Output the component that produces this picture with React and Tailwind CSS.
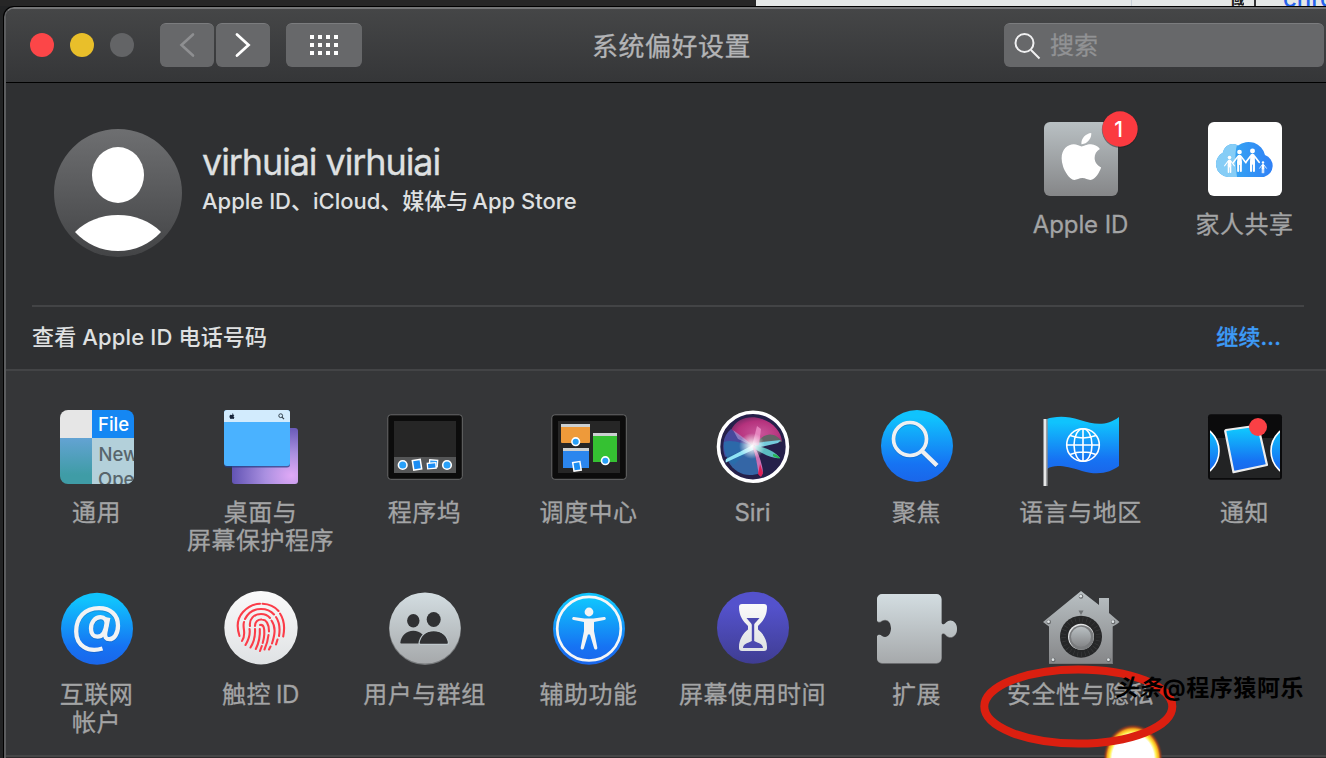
import React from "react";
import { FaApple } from "react-icons/fa";

function Icon({ children, label }) {
  return (
    <svg width="84" height="84" viewBox="0 0 84 84" className="block shrink-0 overflow-visible" role="img" aria-label={label}>
      {children}
    </svg>
  );
}

function Gradients() {
  return (
    <svg width="0" height="0" className="absolute">
      <defs>
        <linearGradient id="blue" x1="0" y1="0" x2="0" y2="1">
          <stop offset="0.1" stopColor="#10c3fd" />
          <stop offset="0.75" stopColor="#1673f3" />
          <stop offset="1" stopColor="#1a66ea" />
        </linearGradient>
        <linearGradient id="silver" x1="0" y1="0" x2="0" y2="1">
          <stop offset="0" stopColor="#d3dde1" />
          <stop offset="1" stopColor="#a6a9ab" />
        </linearGradient>
        <linearGradient id="grey" x1="0" y1="0" x2="0" y2="1">
          <stop offset="0" stopColor="#b9c0c3" />
          <stop offset="1" stopColor="#858688" />
        </linearGradient>
        <linearGradient id="white" x1="0" y1="0" x2="0" y2="1">
          <stop offset="0" stopColor="#fafafa" />
          <stop offset="1" stopColor="#dfe2e4" />
        </linearGradient>
        <linearGradient id="avatar" x1="0" y1="0" x2="0" y2="1">
          <stop offset="0" stopColor="#6e6f71" />
          <stop offset="1" stopColor="#434446" />
        </linearGradient>
        <linearGradient id="cloud" x1="0" y1="0" x2="1" y2="0">
          <stop offset="0.3" stopColor="#36a5f3" />
          <stop offset="1" stopColor="#2f80f6" />
        </linearGradient>
        <linearGradient id="teal" x1="0" y1="0" x2="0" y2="1">
          <stop offset="0" stopColor="#63a3d3" />
          <stop offset="0.8" stopColor="#3f9ca6" />
        </linearGradient>
        <linearGradient id="indigo" x1="0" y1="0" x2="0" y2="1">
          <stop offset="0.2" stopColor="#5452cc" />
          <stop offset="1" stopColor="#3f3d92" />
        </linearGradient>
        <radialGradient id="lilac" cx="0.9" cy="0.85" r="0.9">
          <stop offset="0" stopColor="#e0a9f6" />
          <stop offset="0.45" stopColor="#a98fe0" />
          <stop offset="1" stopColor="#6254b4" />
        </radialGradient>
        <radialGradient id="pink" cx="0.55" cy="0.55" r="0.6">
          <stop offset="0" stopColor="#c9559a" />
          <stop offset="0.7" stopColor="#b5327d" />
          <stop offset="1" stopColor="#7d2a68" />
        </radialGradient>
        <radialGradient id="glow">
          <stop offset="0" stopColor="#ffffff" />
          <stop offset="0.3" stopColor="#ffffff" stopOpacity="0.75" />
          <stop offset="1" stopColor="#ffffff" stopOpacity="0" />
        </radialGradient>
        <radialGradient id="flame">
          <stop offset="0.7" stopColor="#ffffff" />
          <stop offset="0.78" stopColor="#fff04a" />
          <stop offset="0.86" stopColor="#f5a81c" />
          <stop offset="0.92" stopColor="#b0441a" stopOpacity="0.8" />
          <stop offset="1" stopColor="#5a3028" stopOpacity="0" />
        </radialGradient>
      </defs>
    </svg>
  );
}

const Person = ({ x, y, s }) => (
  <g transform={`translate(${x} ${y}) scale(${s})`} stroke="#fff" strokeLinecap="round" fill="none">
    <circle cx="0" cy="0" r="2.4" fill="#fff" stroke="none" />
    <path d="M0 5v6" strokeWidth="4.600" />
    <path d="M-2 5l-4.500 6M2 5l4.500 6" strokeWidth="1.600" />
    <path d="M-1.400 10v9.500M1.400 10v9.500" strokeWidth="2" />
  </g>
);

const AppleIdIcon = () => (
  <Icon label="Apple ID">
    <rect x="6" y="6" width="74" height="74" rx="6" fill="url(#grey)" />
    <FaApple x="16.500" y="13.600" size={53.7} color="#fff" />
    <circle cx="82" cy="13.600" r="18.200" fill="#1f2021" opacity="0.5" />
    <circle cx="82" cy="13" r="17.700" fill="#fb3a40" />
    <text x="80.500" y="20.500" textAnchor="middle" fontFamily="Inter, sans-serif" fontSize="21" fontWeight="500" fill="#fff">1</text>
  </Icon>
);

const FamilyIcon = () => (
  <Icon label="家人共享">
    <rect x="6" y="6" width="74" height="74" rx="6" fill="#fff" />
    <path d="M26 61a13 13 0 0 1-5-24.500 10 10 0 0 1 15-7 17 17 0 0 1 27 9.500 11.500 11.500 0 0 1-1 22z" fill="url(#cloud)" />
    <path d="M26 61a13 13 0 0 1-5-24.500 10 10 0 0 1 14-7.500c-3 10-1 22 0 32z" fill="#86cdf6" />
    <Person x={27.500} y={41.500} s={0.75} />
    <Person x={37.500} y={36} s={0.98} />
    <Person x={50.500} y={35} s={1.03} />
    <Person x={61} y={46.500} s={0.52} />
  </Icon>
);

const GeneralIcon = () => (
  <Icon label="通用">
    <clipPath id="generalClip"><rect x="6" y="6" width="74" height="74" rx="8" /></clipPath>
    <g clipPath="url(#generalClip)" fontFamily="Inter, sans-serif" fontSize="18.500">
      <rect x="6" y="6" width="32" height="28" fill="#e6e6e6" />
      <rect x="38" y="6" width="42" height="28" fill="#1587f3" />
      <rect x="6" y="34" width="32" height="46" fill="url(#teal)" />
      <rect x="38" y="34" width="42" height="46" fill="#b3d0da" />
      <text x="44" y="27" fill="#fff" fontWeight="500">File</text>
      <text x="44.500" y="57" fill="#58656c" fontWeight="500">New</text>
      <text x="44" y="81.500" fill="#58656c" fontWeight="500">Open</text>
    </g>
  </Icon>
);

const DesktopIcon = () => (
  <Icon label="桌面与屏幕保护程序">
    <rect x="14" y="24" width="66" height="56" rx="3" fill="url(#lilac)" />
    <rect x="6" y="7" width="66" height="56.500" rx="3" fill="#243f86" opacity="0.75" />
    <rect x="6" y="6" width="66" height="56" rx="3" fill="#4ab2ff" />
    <path d="M6 18V9a3 3 0 0 1 3-3h60a3 3 0 0 1 3 3v9z" fill="#d2ebfd" />
    <FaApple x="10.600" y="8.800" size={6.7} color="#16243a" />
    <circle cx="62.700" cy="11.700" r="1.900" fill="none" stroke="#34424e" />
    <path d="M64 13.200l2 2" stroke="#34424e" strokeWidth="1.200" />
  </Icon>
);

const Screen = ({ children }) => (
  <>
    <rect x="5.800" y="10.800" width="74.500" height="64.500" rx="3" fill="#0c0c0c" stroke="#68696a" />
    <rect x="12" y="17" width="62" height="52" fill="#262626" />
    {children}
  </>
);

const Dot = ({ x, y, r = 4 }) => <circle cx={x} cy={y} r={r} fill="#28a0f8" stroke="#fff" strokeWidth="1.600" />;

const DockIcon = () => (
  <Icon label="程序坞">
    <Screen>
      <rect x="12" y="53" width="62" height="16" fill="#555657" />
      <Dot x={20.700} y={61} r={4.300} />
      <rect x="31" y="56" width="8" height="9.500" fill="#1c8df3" stroke="#fff" strokeWidth="1.500" transform="rotate(-9 35 60.700)" />
      <rect x="47.500" y="56" width="8" height="6.500" fill="#2c9cf6" stroke="#fff" strokeWidth="1.300" transform="rotate(4 51 59)" />
      <rect x="45.500" y="59" width="8.500" height="5.500" fill="#1c8df3" stroke="#fff" strokeWidth="1.300" transform="rotate(-5 50 62)" />
      <Dot x={65} y={61} r={4.300} />
    </Screen>
  </Icon>
);

const MissionIcon = () => (
  <Icon label="调度中心">
    <Screen>
      <path d="M15 21a1 1 0 0 1 1-1h27a1 1 0 0 1 1 1v17a1 1 0 0 1-1 1H16a1 1 0 0 1-1-1z" fill="#ee9a3a" />
      <path d="M15 20h29v3H15zM17 44h26v3H17zM47 29h24v3H47z" fill="#ccd0d1" />
      <path d="M17 47h26v17H17z" fill="#2b86ee" />
      <path d="M47 32h24v26H47z" fill="#35c132" />
      <Dot x={29.700} y={37.700} r={3.800} />
      <Dot x={59.300} y={56.700} r={3.800} />
      <rect x="27.300" y="58" width="7.300" height="8.700" fill="#1c8df3" stroke="#fff" strokeWidth="1.500" transform="rotate(-9 31 62.300)" />
    </Screen>
  </Icon>
);

const SiriIcon = () => (
  <Icon label="Siri">
    <clipPath id="siriClip"><circle cx="43" cy="42.700" r="31.500" /></clipPath>
    <circle cx="43" cy="42.700" r="34.500" fill="#25204a" stroke="#fff" strokeWidth="3.600" />
    <g clipPath="url(#siriClip)">
      <path d="M21 26C27 14 40 11 52 15s19 13 20 22C62 34 54 34 46 42 35 38 30 33 21 26z" fill="url(#pink)" />
      <path d="M21 25c-9 7-9 20-6 28l28-10C36 38 30 33 21 25z" fill="#46499c" />
      <path d="M18 57c7 13 20 17 32 12L43 44z" fill="#3466a6" />
      <path d="M14 38c8-3 20 2 29 4L24 61c-8-5-11-14-10-23z" fill="#286fac" opacity="0.85" />
      <path d="M46 39c10-12 20-10 26-1z" fill="#626466" />
      <path d="M43 41L16 55l-1 4 4-2 26-12z" fill="#8fe4f5" />
      <path d="M44 39l27-3-3 3-22 5z" fill="#74cbdc" />
      <path d="M43 42c10 0 22 5 27 12-7 1-15-3-27-10z" fill="#5bbdc0" />
      <path d="M63 50c4 0 6 3 7 4s-4 0-7-2z" fill="#28b752" />
      <path d="M42 42c4 9 5 19 7 29 3 2 5-1 3-9-2-8-4-14-8-20z" fill="#c86fb4" />
      <path d="M50 60l3 9-2 4-3-3z" fill="#e01f57" />
      <path d="M42 42l5-20 4 3-2 16z" fill="#ec91c8" opacity="0.8" />
      <path d="M43 42L28 35l-5-9 11 8z" fill="#a391d1" opacity="0.7" />
      <circle cx="42" cy="42" r="13" fill="url(#glow)" />
    </g>
  </Icon>
);

const SpotlightIcon = () => (
  <Icon label="聚焦">
    <circle cx="43" cy="42" r="36" fill="url(#blue)" />
    <g fill="none" stroke="#1759ad" opacity="0.4" transform="translate(0 1)">
      <circle cx="36" cy="35" r="16.500" strokeWidth="3.700" />
      <path d="M48.500 47.500L63 61.500" strokeWidth="4.500" />
    </g>
    <g fill="none" stroke="#eff0f1">
      <circle cx="36" cy="35" r="16.500" strokeWidth="3.700" />
      <path d="M48.500 47.500L63 61.500" strokeWidth="4.500" />
    </g>
  </Icon>
);

const FlagIcon = () => (
  <Icon label="语言与地区">
    <path d="M9 15c6-2 18-4 33 1s27 6 39-3v49c-8 6-20 10-37 5S17 60 9 65z" fill="url(#blue)" />
    <rect x="5" y="15" width="4.700" height="67" fill="#8c8e91" />
    <rect x="6" y="15" width="2.200" height="67" fill="#e7e8e8" />
    <g fill="none" stroke="#fff" strokeWidth="1.600">
      <circle cx="45" cy="41" r="16.300" />
      <ellipse cx="45" cy="41" rx="9" ry="16.300" />
      <path d="M45 24.700v32.600M28.700 41h32.600M32 31.500c8 3 18 3 26 0M32 50.500c8-3 18-3 26 0" />
    </g>
  </Icon>
);

const NotifyIcon = () => (
  <Icon label="通知">
    <clipPath id="notifyClip"><rect x="8" y="12" width="70" height="62" rx="2" /></clipPath>
    <rect x="6" y="10.300" width="74" height="65.500" rx="3" fill="#0b0b0c" />
    <rect x="8" y="34" width="70" height="40" fill="#222324" />
    <g clipPath="url(#notifyClip)">
      <circle cx="-11.500" cy="47" r="26" fill="url(#blue)" stroke="#fff" strokeWidth="1.600" transform="translate(2.500 0)" />
      <circle cx="95" cy="47" r="26" fill="url(#blue)" stroke="#fff" strokeWidth="1.600" />
    </g>
    <path d="M24 26l32-4.500L65 61l-33.500 7.200L23.200 27z" fill="url(#blue)" stroke="#eceded" strokeWidth="2.200" strokeLinejoin="round" />
    <circle cx="56" cy="23" r="9" fill="#fa4045" />
  </Icon>
);

const InternetIcon = () => (
  <Icon label="互联网帐户">
    <circle cx="43" cy="42.700" r="36" fill="url(#blue)" />
    {["#1a5aa8", "#f2f3f4"].map((c, i) => (
      <g key={c} fill="none" stroke={c} strokeWidth="4.300" strokeLinejoin="round" transform={`translate(0 ${i ? 0 : 1})`} opacity={i ? 1 : 0.4}>
        <path d="M48.500 62.500C34 67 22.200 59.500 22.200 45.500 22.200 31.500 31 22.200 45 22.200c11.500 0 19 6.800 19 17.500 0 8-4 13.500-8.500 13.500-3.500 0-5-2.200-4.200-6.500l3-15" />
        <path d="M52.500 38c.5-4-2-6.800-6-6.800-5.500 0-9.500 5-9.500 11.500 0 5 2.500 8 6.500 8 4.800 0 8-5 9-12.700z" />
      </g>
    ))}
  </Icon>
);

const TouchIcon = () => (
  <Icon label="触控 ID">
    <circle cx="43" cy="41.700" r="36.700" fill="url(#white)" />
    <g fill="none" stroke="#fb3d49" strokeWidth="2.100" strokeLinecap="round">
      <path d="M21.500 50c-3-9-2-18 3.500-24s11-8 17-8.300M44.500 17.700c7 .3 12 2.500 16 7.300M62 27.500c4 6 5 14 3.200 23" />
      <path d="M27 33c3-6 9-10 16-10 5 0 10 2 13 5.500M58 31c4 6 4 13 3 19M59.500 53.500l-1.500 5M26 36c-2 6 3 12-2 19" />
      <path d="M32 40c-1-7 4-12 11-12 4 0 7 1.500 9 4M53.500 34.500c5 7 3 15 .5 23M52.500 60.500l-1.500 3M31.500 43c1 6-1 11-4 16" />
      <path d="M37 40c0-4 3-7 7-6.500 6 .5 7 6 7 12M50.500 49c-.5 5-2 10-4 14.500M37 43c.5 8-1 13-4.500 18.500" />
      <path d="M42 39c4-1 4.500 4 4.300 9-.1 3-.7 6-1.600 9M43.800 60l-1.800 5M41.800 43c.5 8-1 14-4 20" />
    </g>
  </Icon>
);

const UsersIcon = () => (
  <Icon label="用户与群组">
    <circle cx="43" cy="42.900" r="36" fill="#76797b" />
    <circle cx="43" cy="42" r="35.600" fill="url(#silver)" />
    <g fill="#303133">
      <ellipse cx="31.300" cy="34.700" rx="6.200" ry="6.800" />
      <path d="M18.300 57c.5-7 6-12.300 13-12.300S44 50 44 57.500H19z" />
      <path d="M37 57.500c1-8 7-12.800 14.700-12.800S66 49.500 66.500 57.500l-1 .8H38z" stroke="#bfc8cb" strokeWidth="1.200" />
      <ellipse cx="51.700" cy="33.500" rx="7" ry="7.600" />
    </g>
  </Icon>
);

const AccessIcon = () => (
  <Icon label="辅助功能">
    <circle cx="43" cy="42.700" r="36" fill="url(#blue)" />
    <circle cx="43" cy="42.700" r="31.800" fill="none" stroke="#f4f6f7" strokeWidth="2.700" />
    <circle cx="43" cy="26" r="4.400" fill="#f3f4f5" />
    <path d="M28 31l10.500 1.400h9L58 31c2.200-.2 2.500 2.700.3 3.100L48 36v9l3.300 16.500c.4 2.300-2.600 2.900-3.200.8L44 48.500h-2l-4.100 13.800c-.6 2.100-3.600 1.500-3.200-.8L38 45v-9l-10.300-1.900c-2.200-.4-1.900-3.300.3-3.100z" fill="#f3f4f5" />
  </Icon>
);

const ScreenTimeIcon = () => (
  <Icon label="屏幕使用时间">
    <circle cx="43" cy="41.700" r="36" fill="url(#indigo)" />
    <path d="M32 18h22c2 0 3 1 3 3 0 9-4 14-9 19v3.500c5 4 9 10 9 17.500v1c0 2-1 3-3 3H32c-2 0-3-1-3-3v-1c0-7.500 4-13.500 9-17.500V40c-5-5-9-10-9-19 0-2 1-3 3-3z" fill="url(#white)" />
    <path d="M36.500 32h13c-2 3-5.300 5-5.300 7v16c4 2 8.800 3 8.800 7H33c0-4 4.800-5 8.800-7V39c0-2-3.300-4-5.300-7z" fill="#4b49b0" />
  </Icon>
);

const puzzle = "M8 8h54.500a5 5 0 0 1 5 5v24c1 2 3 1.500 4.500-.5 4-4.500 11-1.500 11 6.200s-7 10.700-11 6.200c-1.500-2-3.500-2.500-4.500-.5V72a5 5 0 0 1-5 5H8a5 5 0 0 1-5-5V50c1.500-2 3.500-1.500 5 0 4.500 3 9-1 9-8s-4.500-10-9-7.500c-1.500 1.500-3.500 2-5 0V13a5 5 0 0 1 5-5z";
const ExtensionsIcon = () => (
  <Icon label="扩展">
    <path d={puzzle} fill="#7c7e80" transform="translate(0 .8)" />
    <path d={puzzle} fill="url(#silver)" />
  </Icon>
);

const SecurityIcon = () => (
  <Icon label="安全性与隐私">
    <path d="M43 5l18 14v-7h10v15l10.500 9-2.500 2-4.300 2.500V78H11V40.500L5 36z" fill="url(#grey)" />
    <path d="M11 77.500h63.700" stroke="#77797a" />
    <path d="M40.500 24.500h5L43 29z" fill="#6e7274" />
    <circle cx="43" cy="50.700" r="21" fill="#262728" />
    <circle cx="43" cy="50.700" r="17.500" fill="none" stroke="#3c3d3e" strokeWidth="5" strokeDasharray="0.600 3.200" />
    <circle cx="43" cy="50.700" r="13" fill="#e2e4e5" />
    <circle cx="43.500" cy="51.500" r="12.300" fill="#7a7c7e" />
    <circle cx="43" cy="50.700" r="10" fill="url(#grey)" />
    {[[43, 10.500], [10.800, 36], [75.200, 36], [15.300, 74], [70.700, 74]].map(([x, y]) => (
      <g key={`${x}-${y}`}>
        <circle cx={x} cy={y} r="2.200" fill="#66696b" />
        <circle cx={x - 0.300} cy={y - 0.300} r="1.400" fill="#dfe4e6" />
      </g>
    ))}
  </Icon>
);

const TouchLabel = () => <>触控<span className="ml-[5px] tracking-[-0.3px]">ID</span></>;

const rowOne = [
  [GeneralIcon, "通用"],
  [DesktopIcon, "桌面与", "屏幕保护程序"],
  [DockIcon, "程序坞"],
  [MissionIcon, "调度中心"],
  [SiriIcon, "Siri"],
  [SpotlightIcon, "聚焦"],
  [FlagIcon, "语言与地区"],
  [NotifyIcon, "通知"],
];
const rowTwo = [
  [InternetIcon, "互联网", "帐户"],
  [TouchIcon, <TouchLabel key="touch" />],
  [UsersIcon, "用户与群组"],
  [AccessIcon, "辅助功能"],
  [ScreenTimeIcon, "屏幕使用时间"],
  [ExtensionsIcon, "扩展"],
  [SecurityIcon, "安全性与隐私"],
];

function Pane({ item }) {
  const [Glyph, ...lines] = item;
  const latin = typeof lines[0] === "string" && /^[A-Z]/.test(lines[0]);
  return (
    <button className="flex h-[182px] w-[164px] shrink-0 flex-col items-center gap-[11px]">
      <Glyph />
      <span className={`flex flex-col items-center pl-px text-[24px] leading-[27.500px] whitespace-nowrap text-[#a3a4a5] [-webkit-text-stroke:0.3px] ${latin ? "tracking-[-0.1px]" : "tracking-[0.5px]"}`}>
        {lines.map((line, i) => <span key={i}>{line}</span>)}
      </span>
    </button>
  );
}

function TitleBar() {
  return (
    <header className="flex h-[74px] shrink-0 items-start border-b border-black bg-linear-to-b from-[#454647] to-[#353638] pt-[14px] pl-6">
      <div className="flex h-11 items-center gap-4">
        <span className="size-6 rounded-full bg-[#fc4648]" />
        <span className="size-6 rounded-full bg-[#e9bf2a]" />
        <span className="size-6 rounded-full bg-[#636466]" />
      </div>
      <div className="ml-[26px] flex gap-0.5">
        <button className="flex h-11 w-[54px] items-center justify-center rounded-md border-t border-[#7b7c7e] bg-[#67686a] pb-0.5">
          <svg width="16" height="26" viewBox="0 0 16 26" fill="none" stroke="#8e8f91" strokeWidth="2.600" strokeLinecap="round"><path d="M14 2.500L2.500 13 14 23.500" /></svg>
        </button>
        <button className="flex h-11 w-[54px] items-center justify-center rounded-md border-t border-[#7b7c7e] bg-[#67686a] pb-0.5">
          <svg width="16" height="26" viewBox="0 0 16 26" fill="none" stroke="#fff" strokeWidth="2.800" strokeLinecap="round"><path d="M2 2.500L13.500 13 2 23.500" /></svg>
        </button>
      </div>
      <button className="ml-4 flex h-11 w-[76px] items-center justify-center rounded-md border-t border-[#7b7c7e] bg-[#67686a] pb-px">
        <span className="grid grid-cols-4 gap-1">
          {Array.from({ length: 12 }, (_, i) => <span key={i} className="size-1 bg-white" />)}
        </span>
      </button>
      <h1 className="flex-1 pt-px pr-[23px] text-center text-[26px] leading-[46px] tracking-[0.5px] text-[#b3b4b6] [-webkit-text-stroke:0.3px]">系统偏好设置</h1>
      <div className="mr-0.5 flex h-11 w-80 items-center rounded-md border-t border-[#7b7c7e] bg-[#67686a] pl-[10px]">
        <svg width="28" height="28" viewBox="0 0 28 28" fill="none" stroke="#f0f0f1" strokeWidth="2"><circle cx="10.500" cy="11" r="9" /><path d="M17 18l8.500 8.500" /></svg>
        <span className="ml-2 text-[24px] leading-none text-[#919294] [-webkit-text-stroke:0.3px]">搜索</span>
      </div>
    </header>
  );
}

function Profile() {
  return (
    <section className="flex h-[222px] shrink-0 items-start pl-12">
      <svg width="128" height="128" viewBox="0 0 128 128" className="mt-[46px] shrink-0">
        <circle cx="64" cy="64" r="64" fill="url(#avatar)" />
        <ellipse cx="64" cy="46" rx="26" ry="28" fill="#fff" />
        <path d="M21 103C32 92 47 86 64 86s32 6 43 17c-11 12-26 19-43 19s-32-7-43-19z" fill="#fff" />
      </svg>
      <div className="mt-[58px] ml-5 flex flex-1 flex-col whitespace-nowrap text-[#dfe0e1]">
        <span className="text-[36px] leading-[43px] tracking-[-1.1px] [-webkit-text-stroke:0.3px]">virhuiai virhuiai</span>
        <span className="mt-px text-[22px] leading-8 font-medium">Apple ID、iCloud、媒体与<span className="ml-1">App Store</span></span>
      </div>
      <div className="mt-[33px] flex">
        <Pane item={[AppleIdIcon, "Apple ID"]} />
        <Pane item={[FamilyIcon, "家人共享"]} />
      </div>
    </section>
  );
}

export default function App() {
  return (
    <div className="relative flex h-[758px] w-[1326px] flex-col overflow-hidden bg-[#222324] font-[Inter,'Noto_Sans_CJK_SC',sans-serif]">
      <Gradients />
      <div className="flex h-1.5 shrink-0 overflow-hidden bg-[#262626]">
        <div className="ml-[756px] flex h-1.5 flex-1 items-end overflow-hidden bg-[#e5e8e7]">
          <span className="ml-[375px] h-1.5 w-px bg-[#c9d1d8]" />
          <span className="ml-[99px] flex h-1.5 w-4 items-end overflow-hidden text-[17px] leading-[10px] font-bold text-[#202020]">國</span>
          <span className="ml-[10px] h-1.5 w-0.5 bg-[#333]" />
          <span className="ml-[27px] flex h-1.5 items-end overflow-hidden text-[24px] leading-[14px] font-medium text-[#2563eb]">chro</span>
        </div>
      </div>
      <div className="ml-[3px] flex flex-1 flex-col overflow-hidden rounded-tl-[11px] border-t border-l border-black">
        <div className="flex flex-1 flex-col overflow-hidden rounded-tl-[10px] border-t-2 border-l-2 border-t-[#747576] border-l-[#5c5d5f] bg-[#353638]">
          <TitleBar />
          <div className="flex h-[288px] shrink-0 flex-col border-b-2 border-[#434446] bg-[#2f3032]">
            <Profile />
            <div className="mr-[22px] ml-[26px] h-0.5 shrink-0 bg-[#434446]" />
            <div className="flex flex-1 items-center justify-between pr-[45px] pb-0.5 pl-[26px] text-[22px] font-medium tracking-[0.15px] text-[#dfe0e1]">
              <span>查看 Apple ID 电话号码</span>
              <a className="text-[#3d9bf7] [-webkit-text-stroke:0.3px]">继续...</a>
            </div>
          </div>
          <main className="flex h-[386px] shrink-0 flex-col border-b-2 border-[#454647] pt-[33px] pl-2">
            <div className="flex">{rowOne.map((item, i) => <Pane key={i} item={item} />)}</div>
            <div className="flex">{rowTwo.map((item, i) => <Pane key={i} item={item} />)}</div>
          </main>
          <div className="flex-1 bg-[#2e2b2d]" />
        </div>
      </div>
      <svg width="220" height="100" viewBox="0 0 220 100" className="absolute top-[658px] left-[970px]">
        <ellipse cx="163" cy="101" rx="30" ry="35" fill="url(#flame)" />
        <ellipse cx="108.300" cy="48.500" rx="94" ry="37" fill="none" stroke="#db1f10" strokeWidth="8" />
      </svg>
      <span className="absolute top-[672px] left-[1115px] text-[23px] leading-8 font-bold tracking-[0.6px] whitespace-nowrap text-black">
        <i>头条</i>@程序猿阿乐
      </span>
    </div>
  );
}
